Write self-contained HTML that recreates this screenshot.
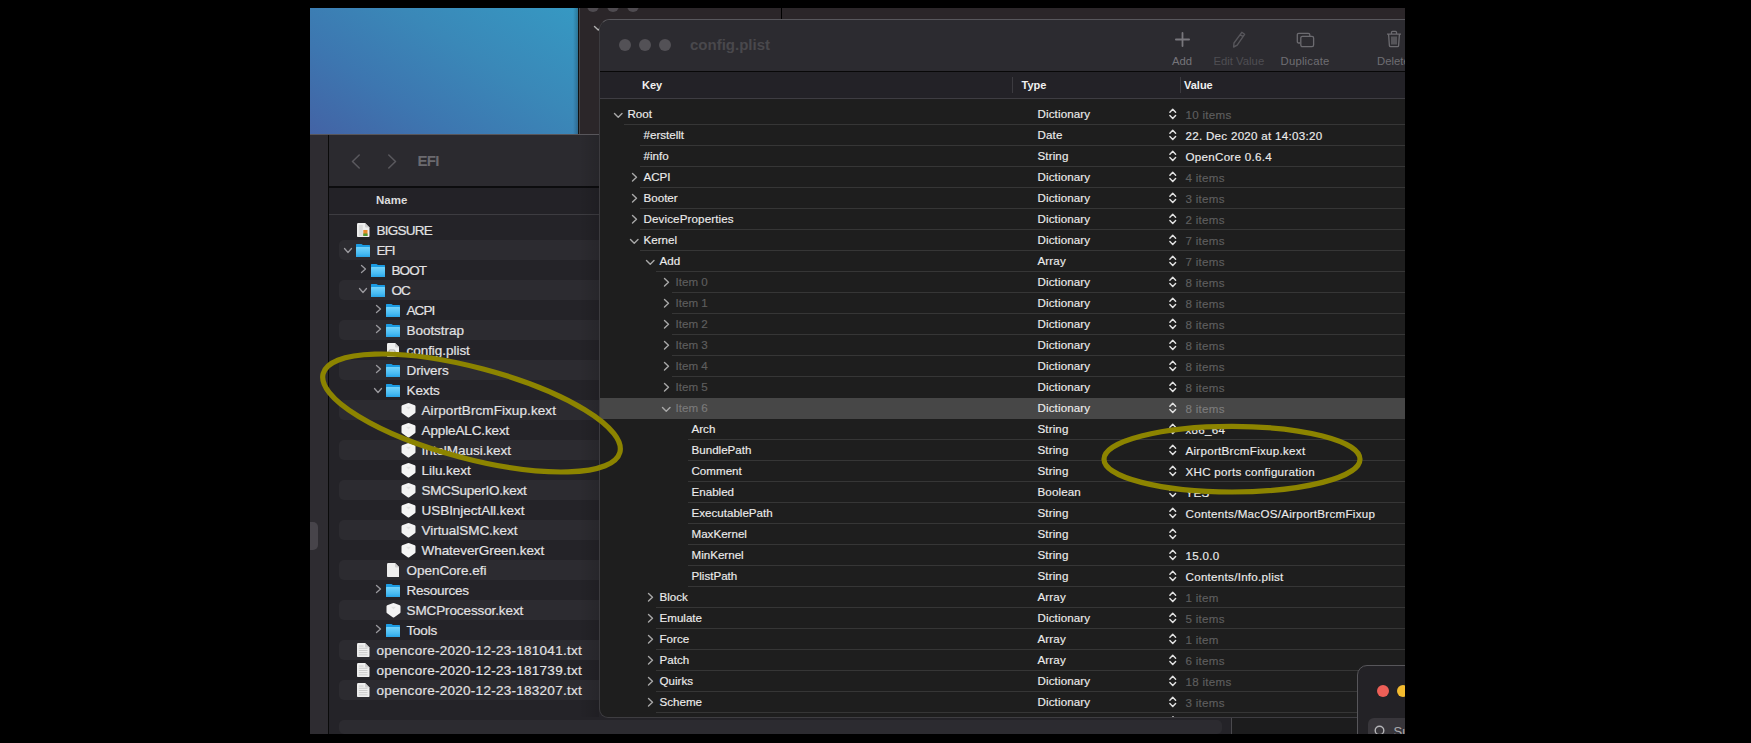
<!DOCTYPE html><html><head><meta charset="utf-8"><style>
html,body{margin:0;padding:0}
body{width:1751px;height:743px;background:#000;position:relative;overflow:hidden;font-family:"Liberation Sans", sans-serif}
.a{position:absolute}
</style></head><body>
<div class="a" style="left:310px;top:8px;width:268px;height:126px;background:linear-gradient(32deg,#4363a5 0%,#3d76b0 30%,#3a88b8 62%,#3699c3 100%)"></div>
<div class="a" style="left:573px;top:8px;width:5px;height:126px;background:linear-gradient(90deg,rgba(0,0,0,0),rgba(0,0,0,0.22))"></div>
<div class="a" style="left:578px;top:8px;width:827px;height:127px;background:#2b2629"></div>
<div class="a" style="left:578px;top:8px;width:1px;height:127px;background:#111"></div>
<div class="a" style="left:579px;top:8px;width:1px;height:127px;background:#4a4749"></div>
<div class="a" style="left:587px;top:0px;width:12px;height:12px;border-radius:50%;background:#4f4b50"></div>
<div class="a" style="left:607px;top:0px;width:12px;height:12px;border-radius:50%;background:#4f4b50"></div>
<div class="a" style="left:627px;top:0px;width:12px;height:12px;border-radius:50%;background:#4f4b50"></div>
<div class="a" style="left:0;top:0;width:1751px;height:8px;background:#000"></div>
<div class="a" style="left:781px;top:8px;width:1px;height:11px;background:#000"></div>
<svg style="position:absolute;left:593.5px;top:25.8px;overflow:visible" width="8.5" height="4.5"><path d="M0.5 0.5 L4.25 4.0 L8.0 0.5" fill="none" stroke="#b0b0b0" stroke-width="1.4" stroke-linecap="round" stroke-linejoin="round"/></svg>
<div class="a" style="left:310px;top:134px;width:922px;height:600px;background:#242328"></div>
<div class="a" style="left:310px;top:134px;width:922px;height:1px;background:#58565b"></div>
<div class="a" style="left:310px;top:135px;width:18px;height:599px;background:#2e2c31"></div>
<div class="a" style="left:328px;top:135px;width:1px;height:599px;background:#0a0a0a"></div>
<div class="a" style="left:310px;top:522px;width:8px;height:28px;background:#47444a;border-radius:0 5px 5px 0"></div>
<div class="a" style="left:329px;top:135px;width:903px;height:52px;background:#2b2a2f"></div>
<div class="a" style="left:329px;top:186px;width:903px;height:2px;background:#0c0c0e"></div>
<svg class="a" style="left:351px;top:153.5px" width="10" height="16"><path d="M8.2 1 L1.5 7.5 L8.2 14" fill="none" stroke="#5a595e" stroke-width="1.5" stroke-linecap="round" stroke-linejoin="round"/></svg>
<svg class="a" style="left:387px;top:153.5px" width="10" height="16"><path d="M1.8 1 L8.5 7.5 L1.8 14" fill="none" stroke="#5a595e" stroke-width="1.5" stroke-linecap="round" stroke-linejoin="round"/></svg>
<div style="position:absolute;left:417.5px;top:152px;font-size:15px;line-height:17px;color:#6b6a6f;font-weight:700;letter-spacing:-0.7px;white-space:nowrap;">EFI</div>
<div class="a" style="left:329px;top:188px;width:903px;height:26px;background:#232227"></div>
<div class="a" style="left:329px;top:214px;width:903px;height:1px;background:#3d3c41"></div>
<div style="position:absolute;left:376px;top:194.3px;font-size:11.5px;line-height:13.5px;color:#dcdcdc;font-weight:700;letter-spacing:0px;white-space:nowrap;">Name</div>
<div class="a" style="left:1231px;top:134px;width:1px;height:600px;background:#4a494d"></div>
<div class="a" style="left:339px;top:240px;width:883px;height:20px;background:#2c2b30;border-radius:5px"></div>
<div class="a" style="left:339px;top:280px;width:883px;height:20px;background:#2c2b30;border-radius:5px"></div>
<div class="a" style="left:339px;top:320px;width:883px;height:20px;background:#2c2b30;border-radius:5px"></div>
<div class="a" style="left:339px;top:360px;width:883px;height:20px;background:#2c2b30;border-radius:5px"></div>
<div class="a" style="left:339px;top:400px;width:883px;height:20px;background:#2c2b30;border-radius:5px"></div>
<div class="a" style="left:339px;top:440px;width:883px;height:20px;background:#2c2b30;border-radius:5px"></div>
<div class="a" style="left:339px;top:480px;width:883px;height:20px;background:#2c2b30;border-radius:5px"></div>
<div class="a" style="left:339px;top:520px;width:883px;height:20px;background:#2c2b30;border-radius:5px"></div>
<div class="a" style="left:339px;top:560px;width:883px;height:20px;background:#2c2b30;border-radius:5px"></div>
<div class="a" style="left:339px;top:600px;width:883px;height:20px;background:#2c2b30;border-radius:5px"></div>
<div class="a" style="left:339px;top:640px;width:883px;height:20px;background:#2c2b30;border-radius:5px"></div>
<div class="a" style="left:339px;top:680px;width:883px;height:20px;background:#2c2b30;border-radius:5px"></div>
<div class="a" style="left:339px;top:720px;width:883px;height:14px;background:#2c2b30;border-radius:5px"></div>
<svg style="position:absolute;left:357px;top:223px" width="12.5" height="14.2" viewBox="0 0 12.5 14.2"><path d="M1.2 0 L8 0 L12.5 4.5 L12.5 13 Q12.5 14.2 11.3 14.2 L1.2 14.2 Q0 14.2 0 13 L0 1.2 Q0 0 1.2 0 Z" fill="#efefef"/><path d="M8 0 L8 3.4 Q8 4.5 9.1 4.5 L12.5 4.5 Z" fill="#cfcfcf"/><rect x="1.8" y="2" width="4" height="11" fill="#dcdcdc"/><rect x="6.3" y="7" width="4.2" height="6" fill="#e88a2a"/><rect x="6.3" y="10.5" width="4.2" height="2.5" fill="#4f9a34"/></svg>
<div style="position:absolute;left:376.5px;top:222.7px;font-size:13.5px;line-height:15.5px;color:#e2e2e4;font-weight:400;letter-spacing:-0.75px;white-space:nowrap;-webkit-text-stroke:0.2px #e2e2e4">BIGSURE</div>
<svg style="position:absolute;left:343.5px;top:248px;overflow:visible" width="8" height="5"><path d="M0.5 0.5 L4.0 4.5 L7.5 0.5" fill="none" stroke="#9a999e" stroke-width="1.3" stroke-linecap="round" stroke-linejoin="round"/></svg>
<svg style="position:absolute;left:356px;top:243.5px" width="14" height="13.5" viewBox="0 0 14 13.5"><defs><linearGradient id="fg" x1="0" y1="0" x2="0" y2="1"><stop offset="0" stop-color="#74d3fb"/><stop offset="0.6" stop-color="#4bbdf3"/><stop offset="1" stop-color="#24a3e8"/></linearGradient></defs><path d="M0 0.6 Q0 0 0.6 0 L5.4 0 Q5.9 0 6.3 0.5 L6.8 1 L13.4 1 Q14 1 14 1.6 L14 13 Q14 13.5 13.5 13.5 L0.5 13.5 Q0 13.5 0 13 Z" fill="#1b9be2"/><path d="M0 3.4 Q0 2.9 0.5 2.9 L13.5 2.9 Q14 2.9 14 3.4 L14 13 Q14 13.5 13.5 13.5 L0.5 13.5 Q0 13.5 0 13 Z" fill="url(#fg)"/></svg>
<div style="position:absolute;left:376.5px;top:242.7px;font-size:13.5px;line-height:15.5px;color:#e2e2e4;font-weight:400;letter-spacing:-0.95px;white-space:nowrap;-webkit-text-stroke:0.2px #e2e2e4">EFI</div>
<svg style="position:absolute;left:360.5px;top:265.3px;overflow:visible" width="5" height="8"><path d="M0.5 0.5 L4.5 4.0 L0.5 7.5" fill="none" stroke="#9a999e" stroke-width="1.3" stroke-linecap="round" stroke-linejoin="round"/></svg>
<svg style="position:absolute;left:371px;top:263.5px" width="14" height="13.5" viewBox="0 0 14 13.5"><defs><linearGradient id="fg" x1="0" y1="0" x2="0" y2="1"><stop offset="0" stop-color="#74d3fb"/><stop offset="0.6" stop-color="#4bbdf3"/><stop offset="1" stop-color="#24a3e8"/></linearGradient></defs><path d="M0 0.6 Q0 0 0.6 0 L5.4 0 Q5.9 0 6.3 0.5 L6.8 1 L13.4 1 Q14 1 14 1.6 L14 13 Q14 13.5 13.5 13.5 L0.5 13.5 Q0 13.5 0 13 Z" fill="#1b9be2"/><path d="M0 3.4 Q0 2.9 0.5 2.9 L13.5 2.9 Q14 2.9 14 3.4 L14 13 Q14 13.5 13.5 13.5 L0.5 13.5 Q0 13.5 0 13 Z" fill="url(#fg)"/></svg>
<div style="position:absolute;left:391.5px;top:262.7px;font-size:13.5px;line-height:15.5px;color:#e2e2e4;font-weight:400;letter-spacing:-0.9px;white-space:nowrap;-webkit-text-stroke:0.2px #e2e2e4">BOOT</div>
<svg style="position:absolute;left:358.5px;top:288px;overflow:visible" width="8" height="5"><path d="M0.5 0.5 L4.0 4.5 L7.5 0.5" fill="none" stroke="#9a999e" stroke-width="1.3" stroke-linecap="round" stroke-linejoin="round"/></svg>
<svg style="position:absolute;left:371px;top:283.5px" width="14" height="13.5" viewBox="0 0 14 13.5"><defs><linearGradient id="fg" x1="0" y1="0" x2="0" y2="1"><stop offset="0" stop-color="#74d3fb"/><stop offset="0.6" stop-color="#4bbdf3"/><stop offset="1" stop-color="#24a3e8"/></linearGradient></defs><path d="M0 0.6 Q0 0 0.6 0 L5.4 0 Q5.9 0 6.3 0.5 L6.8 1 L13.4 1 Q14 1 14 1.6 L14 13 Q14 13.5 13.5 13.5 L0.5 13.5 Q0 13.5 0 13 Z" fill="#1b9be2"/><path d="M0 3.4 Q0 2.9 0.5 2.9 L13.5 2.9 Q14 2.9 14 3.4 L14 13 Q14 13.5 13.5 13.5 L0.5 13.5 Q0 13.5 0 13 Z" fill="url(#fg)"/></svg>
<div style="position:absolute;left:391.5px;top:282.7px;font-size:13.5px;line-height:15.5px;color:#e2e2e4;font-weight:400;letter-spacing:-1.0px;white-space:nowrap;-webkit-text-stroke:0.2px #e2e2e4">OC</div>
<svg style="position:absolute;left:375.5px;top:305.3px;overflow:visible" width="5" height="8"><path d="M0.5 0.5 L4.5 4.0 L0.5 7.5" fill="none" stroke="#9a999e" stroke-width="1.3" stroke-linecap="round" stroke-linejoin="round"/></svg>
<svg style="position:absolute;left:386px;top:303.5px" width="14" height="13.5" viewBox="0 0 14 13.5"><defs><linearGradient id="fg" x1="0" y1="0" x2="0" y2="1"><stop offset="0" stop-color="#74d3fb"/><stop offset="0.6" stop-color="#4bbdf3"/><stop offset="1" stop-color="#24a3e8"/></linearGradient></defs><path d="M0 0.6 Q0 0 0.6 0 L5.4 0 Q5.9 0 6.3 0.5 L6.8 1 L13.4 1 Q14 1 14 1.6 L14 13 Q14 13.5 13.5 13.5 L0.5 13.5 Q0 13.5 0 13 Z" fill="#1b9be2"/><path d="M0 3.4 Q0 2.9 0.5 2.9 L13.5 2.9 Q14 2.9 14 3.4 L14 13 Q14 13.5 13.5 13.5 L0.5 13.5 Q0 13.5 0 13 Z" fill="url(#fg)"/></svg>
<div style="position:absolute;left:406.5px;top:302.7px;font-size:13.5px;line-height:15.5px;color:#e2e2e4;font-weight:400;letter-spacing:-0.9px;white-space:nowrap;-webkit-text-stroke:0.2px #e2e2e4">ACPI</div>
<svg style="position:absolute;left:375.5px;top:325.3px;overflow:visible" width="5" height="8"><path d="M0.5 0.5 L4.5 4.0 L0.5 7.5" fill="none" stroke="#9a999e" stroke-width="1.3" stroke-linecap="round" stroke-linejoin="round"/></svg>
<svg style="position:absolute;left:386px;top:323.5px" width="14" height="13.5" viewBox="0 0 14 13.5"><defs><linearGradient id="fg" x1="0" y1="0" x2="0" y2="1"><stop offset="0" stop-color="#74d3fb"/><stop offset="0.6" stop-color="#4bbdf3"/><stop offset="1" stop-color="#24a3e8"/></linearGradient></defs><path d="M0 0.6 Q0 0 0.6 0 L5.4 0 Q5.9 0 6.3 0.5 L6.8 1 L13.4 1 Q14 1 14 1.6 L14 13 Q14 13.5 13.5 13.5 L0.5 13.5 Q0 13.5 0 13 Z" fill="#1b9be2"/><path d="M0 3.4 Q0 2.9 0.5 2.9 L13.5 2.9 Q14 2.9 14 3.4 L14 13 Q14 13.5 13.5 13.5 L0.5 13.5 Q0 13.5 0 13 Z" fill="url(#fg)"/></svg>
<div style="position:absolute;left:406.5px;top:322.7px;font-size:13.5px;line-height:15.5px;color:#e2e2e4;font-weight:400;letter-spacing:-0.04px;white-space:nowrap;-webkit-text-stroke:0.2px #e2e2e4">Bootstrap</div>
<svg style="position:absolute;left:386.7px;top:343.2px" width="12.5" height="14.2" viewBox="0 0 12.5 14.2"><path d="M1.2 0 L8 0 L12.5 4.5 L12.5 13 Q12.5 14.2 11.3 14.2 L1.2 14.2 Q0 14.2 0 13 L0 1.2 Q0 0 1.2 0 Z" fill="#efefef"/><path d="M8 0 L8 3.4 Q8 4.5 9.1 4.5 L12.5 4.5 Z" fill="#cfcfcf"/><rect x="2" y="7" width="6" height="5" rx="1" fill="none" stroke="#a0a0a0" stroke-width="0.9"/></svg>
<div style="position:absolute;left:406.5px;top:342.7px;font-size:13.5px;line-height:15.5px;color:#e2e2e4;font-weight:400;letter-spacing:-0.04px;white-space:nowrap;-webkit-text-stroke:0.2px #e2e2e4">config.plist</div>
<svg style="position:absolute;left:375.5px;top:365.3px;overflow:visible" width="5" height="8"><path d="M0.5 0.5 L4.5 4.0 L0.5 7.5" fill="none" stroke="#9a999e" stroke-width="1.3" stroke-linecap="round" stroke-linejoin="round"/></svg>
<svg style="position:absolute;left:386px;top:363.5px" width="14" height="13.5" viewBox="0 0 14 13.5"><defs><linearGradient id="fg" x1="0" y1="0" x2="0" y2="1"><stop offset="0" stop-color="#74d3fb"/><stop offset="0.6" stop-color="#4bbdf3"/><stop offset="1" stop-color="#24a3e8"/></linearGradient></defs><path d="M0 0.6 Q0 0 0.6 0 L5.4 0 Q5.9 0 6.3 0.5 L6.8 1 L13.4 1 Q14 1 14 1.6 L14 13 Q14 13.5 13.5 13.5 L0.5 13.5 Q0 13.5 0 13 Z" fill="#1b9be2"/><path d="M0 3.4 Q0 2.9 0.5 2.9 L13.5 2.9 Q14 2.9 14 3.4 L14 13 Q14 13.5 13.5 13.5 L0.5 13.5 Q0 13.5 0 13 Z" fill="url(#fg)"/></svg>
<div style="position:absolute;left:406.5px;top:362.7px;font-size:13.5px;line-height:15.5px;color:#e2e2e4;font-weight:400;letter-spacing:-0.1px;white-space:nowrap;-webkit-text-stroke:0.2px #e2e2e4">Drivers</div>
<svg style="position:absolute;left:373.5px;top:388px;overflow:visible" width="8" height="5"><path d="M0.5 0.5 L4.0 4.5 L7.5 0.5" fill="none" stroke="#9a999e" stroke-width="1.3" stroke-linecap="round" stroke-linejoin="round"/></svg>
<svg style="position:absolute;left:386px;top:383.5px" width="14" height="13.5" viewBox="0 0 14 13.5"><defs><linearGradient id="fg" x1="0" y1="0" x2="0" y2="1"><stop offset="0" stop-color="#74d3fb"/><stop offset="0.6" stop-color="#4bbdf3"/><stop offset="1" stop-color="#24a3e8"/></linearGradient></defs><path d="M0 0.6 Q0 0 0.6 0 L5.4 0 Q5.9 0 6.3 0.5 L6.8 1 L13.4 1 Q14 1 14 1.6 L14 13 Q14 13.5 13.5 13.5 L0.5 13.5 Q0 13.5 0 13 Z" fill="#1b9be2"/><path d="M0 3.4 Q0 2.9 0.5 2.9 L13.5 2.9 Q14 2.9 14 3.4 L14 13 Q14 13.5 13.5 13.5 L0.5 13.5 Q0 13.5 0 13 Z" fill="url(#fg)"/></svg>
<div style="position:absolute;left:406.5px;top:382.7px;font-size:13.5px;line-height:15.5px;color:#e2e2e4;font-weight:400;letter-spacing:-0.1px;white-space:nowrap;-webkit-text-stroke:0.2px #e2e2e4">Kexts</div>
<svg style="position:absolute;left:401px;top:403px" width="15" height="15" viewBox="0 0 15 15"><path d="M7.5 0.1 Q7.9 0.1 8.4 0.3 L13.8 2.3 Q14.5 2.6 14.5 3.4 L14.5 9.2 Q14.5 9.9 13.9 10.3 L8.3 14.3 Q7.5 14.8 6.7 14.3 L1.1 10.3 Q0.5 9.9 0.5 9.2 L0.5 3.4 Q0.5 2.6 1.2 2.3 L6.6 0.3 Q7.1 0.1 7.5 0.1 Z" fill="#f4f4f4"/><path d="M5 3.8 L10 3.8 L7.5 6.4 Z" fill="#e3e3e3"/></svg>
<div style="position:absolute;left:421.5px;top:402.7px;font-size:13.5px;line-height:15.5px;color:#e2e2e4;font-weight:400;letter-spacing:0.08px;white-space:nowrap;-webkit-text-stroke:0.2px #e2e2e4">AirportBrcmFixup.kext</div>
<svg style="position:absolute;left:401px;top:423px" width="15" height="15" viewBox="0 0 15 15"><path d="M7.5 0.1 Q7.9 0.1 8.4 0.3 L13.8 2.3 Q14.5 2.6 14.5 3.4 L14.5 9.2 Q14.5 9.9 13.9 10.3 L8.3 14.3 Q7.5 14.8 6.7 14.3 L1.1 10.3 Q0.5 9.9 0.5 9.2 L0.5 3.4 Q0.5 2.6 1.2 2.3 L6.6 0.3 Q7.1 0.1 7.5 0.1 Z" fill="#f4f4f4"/><path d="M5 3.8 L10 3.8 L7.5 6.4 Z" fill="#e3e3e3"/></svg>
<div style="position:absolute;left:421.5px;top:422.7px;font-size:13.5px;line-height:15.5px;color:#e2e2e4;font-weight:400;letter-spacing:-0.12px;white-space:nowrap;-webkit-text-stroke:0.2px #e2e2e4">AppleALC.kext</div>
<svg style="position:absolute;left:401px;top:443px" width="15" height="15" viewBox="0 0 15 15"><path d="M7.5 0.1 Q7.9 0.1 8.4 0.3 L13.8 2.3 Q14.5 2.6 14.5 3.4 L14.5 9.2 Q14.5 9.9 13.9 10.3 L8.3 14.3 Q7.5 14.8 6.7 14.3 L1.1 10.3 Q0.5 9.9 0.5 9.2 L0.5 3.4 Q0.5 2.6 1.2 2.3 L6.6 0.3 Q7.1 0.1 7.5 0.1 Z" fill="#f4f4f4"/><path d="M5 3.8 L10 3.8 L7.5 6.4 Z" fill="#e3e3e3"/></svg>
<div style="position:absolute;left:421.5px;top:442.7px;font-size:13.5px;line-height:15.5px;color:#e2e2e4;font-weight:400;letter-spacing:-0.04px;white-space:nowrap;-webkit-text-stroke:0.2px #e2e2e4">IntelMausi.kext</div>
<svg style="position:absolute;left:401px;top:463px" width="15" height="15" viewBox="0 0 15 15"><path d="M7.5 0.1 Q7.9 0.1 8.4 0.3 L13.8 2.3 Q14.5 2.6 14.5 3.4 L14.5 9.2 Q14.5 9.9 13.9 10.3 L8.3 14.3 Q7.5 14.8 6.7 14.3 L1.1 10.3 Q0.5 9.9 0.5 9.2 L0.5 3.4 Q0.5 2.6 1.2 2.3 L6.6 0.3 Q7.1 0.1 7.5 0.1 Z" fill="#f4f4f4"/><path d="M5 3.8 L10 3.8 L7.5 6.4 Z" fill="#e3e3e3"/></svg>
<div style="position:absolute;left:421.5px;top:462.7px;font-size:13.5px;line-height:15.5px;color:#e2e2e4;font-weight:400;letter-spacing:-0.04px;white-space:nowrap;-webkit-text-stroke:0.2px #e2e2e4">Lilu.kext</div>
<svg style="position:absolute;left:401px;top:483px" width="15" height="15" viewBox="0 0 15 15"><path d="M7.5 0.1 Q7.9 0.1 8.4 0.3 L13.8 2.3 Q14.5 2.6 14.5 3.4 L14.5 9.2 Q14.5 9.9 13.9 10.3 L8.3 14.3 Q7.5 14.8 6.7 14.3 L1.1 10.3 Q0.5 9.9 0.5 9.2 L0.5 3.4 Q0.5 2.6 1.2 2.3 L6.6 0.3 Q7.1 0.1 7.5 0.1 Z" fill="#f4f4f4"/><path d="M5 3.8 L10 3.8 L7.5 6.4 Z" fill="#e3e3e3"/></svg>
<div style="position:absolute;left:421.5px;top:482.7px;font-size:13.5px;line-height:15.5px;color:#e2e2e4;font-weight:400;letter-spacing:-0.25px;white-space:nowrap;-webkit-text-stroke:0.2px #e2e2e4">SMCSuperIO.kext</div>
<svg style="position:absolute;left:401px;top:503px" width="15" height="15" viewBox="0 0 15 15"><path d="M7.5 0.1 Q7.9 0.1 8.4 0.3 L13.8 2.3 Q14.5 2.6 14.5 3.4 L14.5 9.2 Q14.5 9.9 13.9 10.3 L8.3 14.3 Q7.5 14.8 6.7 14.3 L1.1 10.3 Q0.5 9.9 0.5 9.2 L0.5 3.4 Q0.5 2.6 1.2 2.3 L6.6 0.3 Q7.1 0.1 7.5 0.1 Z" fill="#f4f4f4"/><path d="M5 3.8 L10 3.8 L7.5 6.4 Z" fill="#e3e3e3"/></svg>
<div style="position:absolute;left:421.5px;top:502.7px;font-size:13.5px;line-height:15.5px;color:#e2e2e4;font-weight:400;letter-spacing:-0.04px;white-space:nowrap;-webkit-text-stroke:0.2px #e2e2e4">USBInjectAll.kext</div>
<svg style="position:absolute;left:401px;top:523px" width="15" height="15" viewBox="0 0 15 15"><path d="M7.5 0.1 Q7.9 0.1 8.4 0.3 L13.8 2.3 Q14.5 2.6 14.5 3.4 L14.5 9.2 Q14.5 9.9 13.9 10.3 L8.3 14.3 Q7.5 14.8 6.7 14.3 L1.1 10.3 Q0.5 9.9 0.5 9.2 L0.5 3.4 Q0.5 2.6 1.2 2.3 L6.6 0.3 Q7.1 0.1 7.5 0.1 Z" fill="#f4f4f4"/><path d="M5 3.8 L10 3.8 L7.5 6.4 Z" fill="#e3e3e3"/></svg>
<div style="position:absolute;left:421.5px;top:522.7px;font-size:13.5px;line-height:15.5px;color:#e2e2e4;font-weight:400;letter-spacing:-0.04px;white-space:nowrap;-webkit-text-stroke:0.2px #e2e2e4">VirtualSMC.kext</div>
<svg style="position:absolute;left:401px;top:543px" width="15" height="15" viewBox="0 0 15 15"><path d="M7.5 0.1 Q7.9 0.1 8.4 0.3 L13.8 2.3 Q14.5 2.6 14.5 3.4 L14.5 9.2 Q14.5 9.9 13.9 10.3 L8.3 14.3 Q7.5 14.8 6.7 14.3 L1.1 10.3 Q0.5 9.9 0.5 9.2 L0.5 3.4 Q0.5 2.6 1.2 2.3 L6.6 0.3 Q7.1 0.1 7.5 0.1 Z" fill="#f4f4f4"/><path d="M5 3.8 L10 3.8 L7.5 6.4 Z" fill="#e3e3e3"/></svg>
<div style="position:absolute;left:421.5px;top:542.7px;font-size:13.5px;line-height:15.5px;color:#e2e2e4;font-weight:400;letter-spacing:-0.06px;white-space:nowrap;-webkit-text-stroke:0.2px #e2e2e4">WhateverGreen.kext</div>
<svg style="position:absolute;left:386.7px;top:563.2px" width="12.5" height="14.2" viewBox="0 0 12.5 14.2"><path d="M1.2 0 L8 0 L12.5 4.5 L12.5 13 Q12.5 14.2 11.3 14.2 L1.2 14.2 Q0 14.2 0 13 L0 1.2 Q0 0 1.2 0 Z" fill="#efefef"/><path d="M8 0 L8 3.4 Q8 4.5 9.1 4.5 L12.5 4.5 Z" fill="#cfcfcf"/></svg>
<div style="position:absolute;left:406.5px;top:562.7px;font-size:13.5px;line-height:15.5px;color:#e2e2e4;font-weight:400;letter-spacing:-0.03px;white-space:nowrap;-webkit-text-stroke:0.2px #e2e2e4">OpenCore.efi</div>
<svg style="position:absolute;left:375.5px;top:585.3px;overflow:visible" width="5" height="8"><path d="M0.5 0.5 L4.5 4.0 L0.5 7.5" fill="none" stroke="#9a999e" stroke-width="1.3" stroke-linecap="round" stroke-linejoin="round"/></svg>
<svg style="position:absolute;left:386px;top:583.5px" width="14" height="13.5" viewBox="0 0 14 13.5"><defs><linearGradient id="fg" x1="0" y1="0" x2="0" y2="1"><stop offset="0" stop-color="#74d3fb"/><stop offset="0.6" stop-color="#4bbdf3"/><stop offset="1" stop-color="#24a3e8"/></linearGradient></defs><path d="M0 0.6 Q0 0 0.6 0 L5.4 0 Q5.9 0 6.3 0.5 L6.8 1 L13.4 1 Q14 1 14 1.6 L14 13 Q14 13.5 13.5 13.5 L0.5 13.5 Q0 13.5 0 13 Z" fill="#1b9be2"/><path d="M0 3.4 Q0 2.9 0.5 2.9 L13.5 2.9 Q14 2.9 14 3.4 L14 13 Q14 13.5 13.5 13.5 L0.5 13.5 Q0 13.5 0 13 Z" fill="url(#fg)"/></svg>
<div style="position:absolute;left:406.5px;top:582.7px;font-size:13.5px;line-height:15.5px;color:#e2e2e4;font-weight:400;letter-spacing:-0.24px;white-space:nowrap;-webkit-text-stroke:0.2px #e2e2e4">Resources</div>
<svg style="position:absolute;left:386px;top:603px" width="15" height="15" viewBox="0 0 15 15"><path d="M7.5 0.1 Q7.9 0.1 8.4 0.3 L13.8 2.3 Q14.5 2.6 14.5 3.4 L14.5 9.2 Q14.5 9.9 13.9 10.3 L8.3 14.3 Q7.5 14.8 6.7 14.3 L1.1 10.3 Q0.5 9.9 0.5 9.2 L0.5 3.4 Q0.5 2.6 1.2 2.3 L6.6 0.3 Q7.1 0.1 7.5 0.1 Z" fill="#f4f4f4"/><path d="M5 3.8 L10 3.8 L7.5 6.4 Z" fill="#e3e3e3"/></svg>
<div style="position:absolute;left:406.5px;top:602.7px;font-size:13.5px;line-height:15.5px;color:#e2e2e4;font-weight:400;letter-spacing:-0.11px;white-space:nowrap;-webkit-text-stroke:0.2px #e2e2e4">SMCProcessor.kext</div>
<svg style="position:absolute;left:375.5px;top:625.3px;overflow:visible" width="5" height="8"><path d="M0.5 0.5 L4.5 4.0 L0.5 7.5" fill="none" stroke="#9a999e" stroke-width="1.3" stroke-linecap="round" stroke-linejoin="round"/></svg>
<svg style="position:absolute;left:386px;top:623.5px" width="14" height="13.5" viewBox="0 0 14 13.5"><defs><linearGradient id="fg" x1="0" y1="0" x2="0" y2="1"><stop offset="0" stop-color="#74d3fb"/><stop offset="0.6" stop-color="#4bbdf3"/><stop offset="1" stop-color="#24a3e8"/></linearGradient></defs><path d="M0 0.6 Q0 0 0.6 0 L5.4 0 Q5.9 0 6.3 0.5 L6.8 1 L13.4 1 Q14 1 14 1.6 L14 13 Q14 13.5 13.5 13.5 L0.5 13.5 Q0 13.5 0 13 Z" fill="#1b9be2"/><path d="M0 3.4 Q0 2.9 0.5 2.9 L13.5 2.9 Q14 2.9 14 3.4 L14 13 Q14 13.5 13.5 13.5 L0.5 13.5 Q0 13.5 0 13 Z" fill="url(#fg)"/></svg>
<div style="position:absolute;left:406.5px;top:622.7px;font-size:13.5px;line-height:15.5px;color:#e2e2e4;font-weight:400;letter-spacing:-0.2px;white-space:nowrap;-webkit-text-stroke:0.2px #e2e2e4">Tools</div>
<svg style="position:absolute;left:357px;top:643.2px" width="12.5" height="14.2" viewBox="0 0 12.5 14.2"><path d="M1.2 0 L8 0 L12.5 4.5 L12.5 13 Q12.5 14.2 11.3 14.2 L1.2 14.2 Q0 14.2 0 13 L0 1.2 Q0 0 1.2 0 Z" fill="#efefef"/><path d="M8 0 L8 3.4 Q8 4.5 9.1 4.5 L12.5 4.5 Z" fill="#cfcfcf"/><rect x="1.8" y="2.6" width="4.7" height="0.9" fill="#c8c8c8"/><rect x="1.8" y="4.800000000000001" width="8.7" height="0.9" fill="#c8c8c8"/><rect x="1.8" y="7.0" width="8.7" height="0.9" fill="#c8c8c8"/><rect x="1.8" y="9.200000000000001" width="8.7" height="0.9" fill="#c8c8c8"/><rect x="1.8" y="11.4" width="8.7" height="0.9" fill="#c8c8c8"/></svg>
<div style="position:absolute;left:376.5px;top:642.7px;font-size:13.5px;line-height:15.5px;color:#e2e2e4;font-weight:400;letter-spacing:0.27px;white-space:nowrap;-webkit-text-stroke:0.2px #e2e2e4">opencore-2020-12-23-181041.txt</div>
<svg style="position:absolute;left:357px;top:663.2px" width="12.5" height="14.2" viewBox="0 0 12.5 14.2"><path d="M1.2 0 L8 0 L12.5 4.5 L12.5 13 Q12.5 14.2 11.3 14.2 L1.2 14.2 Q0 14.2 0 13 L0 1.2 Q0 0 1.2 0 Z" fill="#efefef"/><path d="M8 0 L8 3.4 Q8 4.5 9.1 4.5 L12.5 4.5 Z" fill="#cfcfcf"/><rect x="1.8" y="2.6" width="4.7" height="0.9" fill="#c8c8c8"/><rect x="1.8" y="4.800000000000001" width="8.7" height="0.9" fill="#c8c8c8"/><rect x="1.8" y="7.0" width="8.7" height="0.9" fill="#c8c8c8"/><rect x="1.8" y="9.200000000000001" width="8.7" height="0.9" fill="#c8c8c8"/><rect x="1.8" y="11.4" width="8.7" height="0.9" fill="#c8c8c8"/></svg>
<div style="position:absolute;left:376.5px;top:662.7px;font-size:13.5px;line-height:15.5px;color:#e2e2e4;font-weight:400;letter-spacing:0.27px;white-space:nowrap;-webkit-text-stroke:0.2px #e2e2e4">opencore-2020-12-23-181739.txt</div>
<svg style="position:absolute;left:357px;top:683.2px" width="12.5" height="14.2" viewBox="0 0 12.5 14.2"><path d="M1.2 0 L8 0 L12.5 4.5 L12.5 13 Q12.5 14.2 11.3 14.2 L1.2 14.2 Q0 14.2 0 13 L0 1.2 Q0 0 1.2 0 Z" fill="#efefef"/><path d="M8 0 L8 3.4 Q8 4.5 9.1 4.5 L12.5 4.5 Z" fill="#cfcfcf"/><rect x="1.8" y="2.6" width="4.7" height="0.9" fill="#c8c8c8"/><rect x="1.8" y="4.800000000000001" width="8.7" height="0.9" fill="#c8c8c8"/><rect x="1.8" y="7.0" width="8.7" height="0.9" fill="#c8c8c8"/><rect x="1.8" y="9.200000000000001" width="8.7" height="0.9" fill="#c8c8c8"/><rect x="1.8" y="11.4" width="8.7" height="0.9" fill="#c8c8c8"/></svg>
<div style="position:absolute;left:376.5px;top:682.7px;font-size:13.5px;line-height:15.5px;color:#e2e2e4;font-weight:400;letter-spacing:0.27px;white-space:nowrap;-webkit-text-stroke:0.2px #e2e2e4">opencore-2020-12-23-183207.txt</div>
<div class="a" style="left:1232px;top:640px;width:173px;height:94px;background:#1c1c1d"></div>
<div class="a" style="left:579px;top:135px;width:20px;height:582px;background:linear-gradient(90deg,rgba(0,0,0,0),rgba(0,0,0,0.12))"></div>
<div class="a" style="left:599px;top:19px;width:818px;height:699px;background:#1e1e1e;border:1px solid;border-color:#58575c #3f3e42 #3e3d41 #3c3b3f;border-radius:11px 0 0 9px;box-sizing:border-box;overflow:hidden">
<div class="a" style="left:0;top:0;width:820px;height:51px;background:#2c2b30"></div>
<div class="a" style="left:0;top:51px;width:820px;height:2px;background:#080808"></div>
<div class="a" style="left:19px;top:19px;width:12px;height:12px;border-radius:50%;background:#535156"></div>
<div class="a" style="left:39px;top:19px;width:12px;height:12px;border-radius:50%;background:#535156"></div>
<div class="a" style="left:59px;top:19px;width:12px;height:12px;border-radius:50%;background:#535156"></div>
<div style="position:absolute;left:90px;top:16.299999999999997px;font-size:15px;line-height:17px;color:#49484c;font-weight:700;letter-spacing:0px;white-space:nowrap;">config.plist</div>
</div>
<svg class="a" style="left:1174.9px;top:31.9px" width="15" height="15"><path d="M7.5 0.9 V14.1 M0.9 7.5 H14.1" stroke="#78777c" stroke-width="1.8" stroke-linecap="round"/></svg>
<div style="position:absolute;left:1172px;top:55px;font-size:11.3px;line-height:13.3px;color:#75747a;font-weight:400;letter-spacing:0px;white-space:nowrap;">Add</div>
<svg class="a" style="left:1232px;top:31px" width="14" height="17"><path d="M9.8 1.3 L12.6 3.3 L5.2 14.2 L1.6 16 L2 12 Z M8.2 3.6 L11.1 5.6" fill="none" stroke="#57565b" stroke-width="1.4" stroke-linejoin="round"/></svg>
<div style="position:absolute;left:1213.5px;top:55px;font-size:11.3px;line-height:13.3px;color:#4f4e53;font-weight:400;letter-spacing:0px;white-space:nowrap;">Edit Value</div>
<svg class="a" style="left:1296px;top:32px" width="19" height="16"><path d="M4 11 H2.8 Q1.3 11 1.3 9.5 V2.8 Q1.3 1.3 2.8 1.3 H12.3 Q13.8 1.3 13.8 2.8 V4" fill="none" stroke="#6c6b70" stroke-width="1.3"/><rect x="4.8" y="4.3" width="12.8" height="10.4" rx="1.6" fill="none" stroke="#6c6b70" stroke-width="1.3"/></svg>
<div style="position:absolute;left:1280.5px;top:55px;font-size:11.3px;line-height:13.3px;color:#6f6e73;font-weight:400;letter-spacing:0.22px;white-space:nowrap;">Duplicate</div>
<svg class="a" style="left:1386px;top:30px" width="16" height="18"><path d="M1 4.2 H15 M5.5 4 V2.3 Q5.5 1.3 6.5 1.3 H9.5 Q10.5 1.3 10.5 2.3 V4 M2.6 4.5 L3.4 15.6 Q3.5 16.7 4.6 16.7 H11.4 Q12.5 16.7 12.6 15.6 L13.4 4.5 M6 6.5 V14.5 M8 6.5 V14.5 M10 6.5 V14.5" fill="none" stroke="#6c6b70" stroke-width="1.3"/></svg>
<div style="position:absolute;left:1377px;top:55px;font-size:11.3px;line-height:13.3px;color:#6f6e73;font-weight:400;letter-spacing:0px;white-space:nowrap;">Delete</div>
<div class="a" style="left:600px;top:72px;width:805px;height:26px;background:#232227"></div>
<div class="a" style="left:600px;top:98px;width:805px;height:1px;background:#3e3d42"></div>
<div style="position:absolute;left:642px;top:79px;font-size:11px;line-height:13px;color:#f0f0f0;font-weight:700;letter-spacing:0px;white-space:nowrap;">Key</div>
<div class="a" style="left:1012px;top:77px;width:1px;height:16px;background:#3c3b40"></div>
<div style="position:absolute;left:1021.5px;top:79px;font-size:11px;line-height:13px;color:#f0f0f0;font-weight:700;letter-spacing:0px;white-space:nowrap;">Type</div>
<div class="a" style="left:1180px;top:77px;width:1px;height:16px;background:#3c3b40"></div>
<div style="position:absolute;left:1184px;top:79px;font-size:11px;line-height:13px;color:#f0f0f0;font-weight:700;letter-spacing:0px;white-space:nowrap;">Value</div>
<div class="a" style="left:624.0px;top:124px;width:781.0px;height:1px;background:#363636"></div>
<svg style="position:absolute;left:613.5px;top:112.8px;overflow:visible" width="8.5" height="4.8"><path d="M0.5 0.5 L4.25 4.3 L8.0 0.5" fill="none" stroke="#a8a8a8" stroke-width="1.4" stroke-linecap="round" stroke-linejoin="round"/></svg>
<div style="position:absolute;left:627.5px;top:107.3386px;font-size:11.6px;line-height:13.6px;color:#ececec;font-weight:400;letter-spacing:0.0px;white-space:nowrap;-webkit-text-stroke:0.15px #ececec">Root</div>
<div style="position:absolute;left:1037.5px;top:107.3386px;font-size:11.6px;line-height:13.6px;color:#ececec;font-weight:400;letter-spacing:0.12px;white-space:nowrap;-webkit-text-stroke:0.15px #ececec">Dictionary</div>
<svg style="position:absolute;left:1169.3px;top:108px;overflow:visible" width="8" height="12"><path d="M0.9 4.2 L3.75 1.3 L6.6 4.2 M0.9 7.6 L3.75 10.6 L6.6 7.6" fill="none" stroke="#e2e2e2" stroke-width="1.45" stroke-linecap="round" stroke-linejoin="round"/></svg>
<div style="position:absolute;left:1185.5px;top:107.8386px;font-size:11.6px;line-height:13.6px;color:#5f5f5f;font-weight:400;letter-spacing:0.28px;white-space:nowrap;-webkit-text-stroke:0.15px #5f5f5f">10 items</div>
<div class="a" style="left:640.0px;top:145px;width:765.0px;height:1px;background:#363636"></div>
<div style="position:absolute;left:643.5px;top:128.3386px;font-size:11.6px;line-height:13.6px;color:#ececec;font-weight:400;letter-spacing:0.0px;white-space:nowrap;-webkit-text-stroke:0.15px #ececec">#erstellt</div>
<div style="position:absolute;left:1037.5px;top:128.3386px;font-size:11.6px;line-height:13.6px;color:#ececec;font-weight:400;letter-spacing:0.12px;white-space:nowrap;-webkit-text-stroke:0.15px #ececec">Date</div>
<svg style="position:absolute;left:1169.3px;top:129px;overflow:visible" width="8" height="12"><path d="M0.9 4.2 L3.75 1.3 L6.6 4.2 M0.9 7.6 L3.75 10.6 L6.6 7.6" fill="none" stroke="#e2e2e2" stroke-width="1.45" stroke-linecap="round" stroke-linejoin="round"/></svg>
<div style="position:absolute;left:1185.5px;top:128.8386px;font-size:11.6px;line-height:13.6px;color:#ececec;font-weight:400;letter-spacing:0.28px;white-space:nowrap;-webkit-text-stroke:0.15px #ececec">22. Dec 2020 at 14:03:20</div>
<div class="a" style="left:640.0px;top:166px;width:765.0px;height:1px;background:#363636"></div>
<div style="position:absolute;left:643.5px;top:149.3386px;font-size:11.6px;line-height:13.6px;color:#ececec;font-weight:400;letter-spacing:0.0px;white-space:nowrap;-webkit-text-stroke:0.15px #ececec">#info</div>
<div style="position:absolute;left:1037.5px;top:149.3386px;font-size:11.6px;line-height:13.6px;color:#ececec;font-weight:400;letter-spacing:0.12px;white-space:nowrap;-webkit-text-stroke:0.15px #ececec">String</div>
<svg style="position:absolute;left:1169.3px;top:150px;overflow:visible" width="8" height="12"><path d="M0.9 4.2 L3.75 1.3 L6.6 4.2 M0.9 7.6 L3.75 10.6 L6.6 7.6" fill="none" stroke="#e2e2e2" stroke-width="1.45" stroke-linecap="round" stroke-linejoin="round"/></svg>
<div style="position:absolute;left:1185.5px;top:149.8386px;font-size:11.6px;line-height:13.6px;color:#ececec;font-weight:400;letter-spacing:0.28px;white-space:nowrap;-webkit-text-stroke:0.15px #ececec">OpenCore 0.6.4</div>
<div class="a" style="left:640.0px;top:187px;width:765.0px;height:1px;background:#363636"></div>
<svg style="position:absolute;left:632.2px;top:172.8px;overflow:visible" width="5" height="8.5"><path d="M0.5 0.5 L4.5 4.25 L0.5 8.0" fill="none" stroke="#a8a8a8" stroke-width="1.4" stroke-linecap="round" stroke-linejoin="round"/></svg>
<div style="position:absolute;left:643.5px;top:170.3386px;font-size:11.6px;line-height:13.6px;color:#ececec;font-weight:400;letter-spacing:0.0px;white-space:nowrap;-webkit-text-stroke:0.15px #ececec">ACPI</div>
<div style="position:absolute;left:1037.5px;top:170.3386px;font-size:11.6px;line-height:13.6px;color:#ececec;font-weight:400;letter-spacing:0.12px;white-space:nowrap;-webkit-text-stroke:0.15px #ececec">Dictionary</div>
<svg style="position:absolute;left:1169.3px;top:171px;overflow:visible" width="8" height="12"><path d="M0.9 4.2 L3.75 1.3 L6.6 4.2 M0.9 7.6 L3.75 10.6 L6.6 7.6" fill="none" stroke="#e2e2e2" stroke-width="1.45" stroke-linecap="round" stroke-linejoin="round"/></svg>
<div style="position:absolute;left:1185.5px;top:170.8386px;font-size:11.6px;line-height:13.6px;color:#5f5f5f;font-weight:400;letter-spacing:0.28px;white-space:nowrap;-webkit-text-stroke:0.15px #5f5f5f">4 items</div>
<div class="a" style="left:640.0px;top:208px;width:765.0px;height:1px;background:#363636"></div>
<svg style="position:absolute;left:632.2px;top:193.8px;overflow:visible" width="5" height="8.5"><path d="M0.5 0.5 L4.5 4.25 L0.5 8.0" fill="none" stroke="#a8a8a8" stroke-width="1.4" stroke-linecap="round" stroke-linejoin="round"/></svg>
<div style="position:absolute;left:643.5px;top:191.3386px;font-size:11.6px;line-height:13.6px;color:#ececec;font-weight:400;letter-spacing:0.0px;white-space:nowrap;-webkit-text-stroke:0.15px #ececec">Booter</div>
<div style="position:absolute;left:1037.5px;top:191.3386px;font-size:11.6px;line-height:13.6px;color:#ececec;font-weight:400;letter-spacing:0.12px;white-space:nowrap;-webkit-text-stroke:0.15px #ececec">Dictionary</div>
<svg style="position:absolute;left:1169.3px;top:192px;overflow:visible" width="8" height="12"><path d="M0.9 4.2 L3.75 1.3 L6.6 4.2 M0.9 7.6 L3.75 10.6 L6.6 7.6" fill="none" stroke="#e2e2e2" stroke-width="1.45" stroke-linecap="round" stroke-linejoin="round"/></svg>
<div style="position:absolute;left:1185.5px;top:191.8386px;font-size:11.6px;line-height:13.6px;color:#5f5f5f;font-weight:400;letter-spacing:0.28px;white-space:nowrap;-webkit-text-stroke:0.15px #5f5f5f">3 items</div>
<div class="a" style="left:640.0px;top:229px;width:765.0px;height:1px;background:#363636"></div>
<svg style="position:absolute;left:632.2px;top:214.8px;overflow:visible" width="5" height="8.5"><path d="M0.5 0.5 L4.5 4.25 L0.5 8.0" fill="none" stroke="#a8a8a8" stroke-width="1.4" stroke-linecap="round" stroke-linejoin="round"/></svg>
<div style="position:absolute;left:643.5px;top:212.3386px;font-size:11.6px;line-height:13.6px;color:#ececec;font-weight:400;letter-spacing:0.12px;white-space:nowrap;-webkit-text-stroke:0.15px #ececec">DeviceProperties</div>
<div style="position:absolute;left:1037.5px;top:212.3386px;font-size:11.6px;line-height:13.6px;color:#ececec;font-weight:400;letter-spacing:0.12px;white-space:nowrap;-webkit-text-stroke:0.15px #ececec">Dictionary</div>
<svg style="position:absolute;left:1169.3px;top:213px;overflow:visible" width="8" height="12"><path d="M0.9 4.2 L3.75 1.3 L6.6 4.2 M0.9 7.6 L3.75 10.6 L6.6 7.6" fill="none" stroke="#e2e2e2" stroke-width="1.45" stroke-linecap="round" stroke-linejoin="round"/></svg>
<div style="position:absolute;left:1185.5px;top:212.8386px;font-size:11.6px;line-height:13.6px;color:#5f5f5f;font-weight:400;letter-spacing:0.28px;white-space:nowrap;-webkit-text-stroke:0.15px #5f5f5f">2 items</div>
<div class="a" style="left:640.0px;top:250px;width:765.0px;height:1px;background:#363636"></div>
<svg style="position:absolute;left:629.5px;top:238.8px;overflow:visible" width="8.5" height="4.8"><path d="M0.5 0.5 L4.25 4.3 L8.0 0.5" fill="none" stroke="#a8a8a8" stroke-width="1.4" stroke-linecap="round" stroke-linejoin="round"/></svg>
<div style="position:absolute;left:643.5px;top:233.3386px;font-size:11.6px;line-height:13.6px;color:#ececec;font-weight:400;letter-spacing:0.0px;white-space:nowrap;-webkit-text-stroke:0.15px #ececec">Kernel</div>
<div style="position:absolute;left:1037.5px;top:233.3386px;font-size:11.6px;line-height:13.6px;color:#ececec;font-weight:400;letter-spacing:0.12px;white-space:nowrap;-webkit-text-stroke:0.15px #ececec">Dictionary</div>
<svg style="position:absolute;left:1169.3px;top:234px;overflow:visible" width="8" height="12"><path d="M0.9 4.2 L3.75 1.3 L6.6 4.2 M0.9 7.6 L3.75 10.6 L6.6 7.6" fill="none" stroke="#e2e2e2" stroke-width="1.45" stroke-linecap="round" stroke-linejoin="round"/></svg>
<div style="position:absolute;left:1185.5px;top:233.8386px;font-size:11.6px;line-height:13.6px;color:#5f5f5f;font-weight:400;letter-spacing:0.28px;white-space:nowrap;-webkit-text-stroke:0.15px #5f5f5f">7 items</div>
<div class="a" style="left:656.0px;top:271px;width:749.0px;height:1px;background:#363636"></div>
<svg style="position:absolute;left:645.5px;top:259.8px;overflow:visible" width="8.5" height="4.8"><path d="M0.5 0.5 L4.25 4.3 L8.0 0.5" fill="none" stroke="#a8a8a8" stroke-width="1.4" stroke-linecap="round" stroke-linejoin="round"/></svg>
<div style="position:absolute;left:659.5px;top:254.3386px;font-size:11.6px;line-height:13.6px;color:#ececec;font-weight:400;letter-spacing:0.0px;white-space:nowrap;-webkit-text-stroke:0.15px #ececec">Add</div>
<div style="position:absolute;left:1037.5px;top:254.3386px;font-size:11.6px;line-height:13.6px;color:#ececec;font-weight:400;letter-spacing:0.12px;white-space:nowrap;-webkit-text-stroke:0.15px #ececec">Array</div>
<svg style="position:absolute;left:1169.3px;top:255px;overflow:visible" width="8" height="12"><path d="M0.9 4.2 L3.75 1.3 L6.6 4.2 M0.9 7.6 L3.75 10.6 L6.6 7.6" fill="none" stroke="#e2e2e2" stroke-width="1.45" stroke-linecap="round" stroke-linejoin="round"/></svg>
<div style="position:absolute;left:1185.5px;top:254.8386px;font-size:11.6px;line-height:13.6px;color:#5f5f5f;font-weight:400;letter-spacing:0.28px;white-space:nowrap;-webkit-text-stroke:0.15px #5f5f5f">7 items</div>
<div class="a" style="left:672.0px;top:292px;width:733.0px;height:1px;background:#363636"></div>
<svg style="position:absolute;left:664.2px;top:277.8px;overflow:visible" width="5" height="8.5"><path d="M0.5 0.5 L4.5 4.25 L0.5 8.0" fill="none" stroke="#a8a8a8" stroke-width="1.4" stroke-linecap="round" stroke-linejoin="round"/></svg>
<div style="position:absolute;left:675.5px;top:275.3386px;font-size:11.6px;line-height:13.6px;color:#5e5e5e;font-weight:400;letter-spacing:0.0px;white-space:nowrap;-webkit-text-stroke:0.15px #5e5e5e">Item 0</div>
<div style="position:absolute;left:1037.5px;top:275.3386px;font-size:11.6px;line-height:13.6px;color:#ececec;font-weight:400;letter-spacing:0.12px;white-space:nowrap;-webkit-text-stroke:0.15px #ececec">Dictionary</div>
<svg style="position:absolute;left:1169.3px;top:276px;overflow:visible" width="8" height="12"><path d="M0.9 4.2 L3.75 1.3 L6.6 4.2 M0.9 7.6 L3.75 10.6 L6.6 7.6" fill="none" stroke="#e2e2e2" stroke-width="1.45" stroke-linecap="round" stroke-linejoin="round"/></svg>
<div style="position:absolute;left:1185.5px;top:275.8386px;font-size:11.6px;line-height:13.6px;color:#5f5f5f;font-weight:400;letter-spacing:0.28px;white-space:nowrap;-webkit-text-stroke:0.15px #5f5f5f">8 items</div>
<div class="a" style="left:672.0px;top:313px;width:733.0px;height:1px;background:#363636"></div>
<svg style="position:absolute;left:664.2px;top:298.8px;overflow:visible" width="5" height="8.5"><path d="M0.5 0.5 L4.5 4.25 L0.5 8.0" fill="none" stroke="#a8a8a8" stroke-width="1.4" stroke-linecap="round" stroke-linejoin="round"/></svg>
<div style="position:absolute;left:675.5px;top:296.3386px;font-size:11.6px;line-height:13.6px;color:#5e5e5e;font-weight:400;letter-spacing:0.0px;white-space:nowrap;-webkit-text-stroke:0.15px #5e5e5e">Item 1</div>
<div style="position:absolute;left:1037.5px;top:296.3386px;font-size:11.6px;line-height:13.6px;color:#ececec;font-weight:400;letter-spacing:0.12px;white-space:nowrap;-webkit-text-stroke:0.15px #ececec">Dictionary</div>
<svg style="position:absolute;left:1169.3px;top:297px;overflow:visible" width="8" height="12"><path d="M0.9 4.2 L3.75 1.3 L6.6 4.2 M0.9 7.6 L3.75 10.6 L6.6 7.6" fill="none" stroke="#e2e2e2" stroke-width="1.45" stroke-linecap="round" stroke-linejoin="round"/></svg>
<div style="position:absolute;left:1185.5px;top:296.8386px;font-size:11.6px;line-height:13.6px;color:#5f5f5f;font-weight:400;letter-spacing:0.28px;white-space:nowrap;-webkit-text-stroke:0.15px #5f5f5f">8 items</div>
<div class="a" style="left:672.0px;top:334px;width:733.0px;height:1px;background:#363636"></div>
<svg style="position:absolute;left:664.2px;top:319.8px;overflow:visible" width="5" height="8.5"><path d="M0.5 0.5 L4.5 4.25 L0.5 8.0" fill="none" stroke="#a8a8a8" stroke-width="1.4" stroke-linecap="round" stroke-linejoin="round"/></svg>
<div style="position:absolute;left:675.5px;top:317.3386px;font-size:11.6px;line-height:13.6px;color:#5e5e5e;font-weight:400;letter-spacing:0.0px;white-space:nowrap;-webkit-text-stroke:0.15px #5e5e5e">Item 2</div>
<div style="position:absolute;left:1037.5px;top:317.3386px;font-size:11.6px;line-height:13.6px;color:#ececec;font-weight:400;letter-spacing:0.12px;white-space:nowrap;-webkit-text-stroke:0.15px #ececec">Dictionary</div>
<svg style="position:absolute;left:1169.3px;top:318px;overflow:visible" width="8" height="12"><path d="M0.9 4.2 L3.75 1.3 L6.6 4.2 M0.9 7.6 L3.75 10.6 L6.6 7.6" fill="none" stroke="#e2e2e2" stroke-width="1.45" stroke-linecap="round" stroke-linejoin="round"/></svg>
<div style="position:absolute;left:1185.5px;top:317.8386px;font-size:11.6px;line-height:13.6px;color:#5f5f5f;font-weight:400;letter-spacing:0.28px;white-space:nowrap;-webkit-text-stroke:0.15px #5f5f5f">8 items</div>
<div class="a" style="left:672.0px;top:355px;width:733.0px;height:1px;background:#363636"></div>
<svg style="position:absolute;left:664.2px;top:340.8px;overflow:visible" width="5" height="8.5"><path d="M0.5 0.5 L4.5 4.25 L0.5 8.0" fill="none" stroke="#a8a8a8" stroke-width="1.4" stroke-linecap="round" stroke-linejoin="round"/></svg>
<div style="position:absolute;left:675.5px;top:338.3386px;font-size:11.6px;line-height:13.6px;color:#5e5e5e;font-weight:400;letter-spacing:0.0px;white-space:nowrap;-webkit-text-stroke:0.15px #5e5e5e">Item 3</div>
<div style="position:absolute;left:1037.5px;top:338.3386px;font-size:11.6px;line-height:13.6px;color:#ececec;font-weight:400;letter-spacing:0.12px;white-space:nowrap;-webkit-text-stroke:0.15px #ececec">Dictionary</div>
<svg style="position:absolute;left:1169.3px;top:339px;overflow:visible" width="8" height="12"><path d="M0.9 4.2 L3.75 1.3 L6.6 4.2 M0.9 7.6 L3.75 10.6 L6.6 7.6" fill="none" stroke="#e2e2e2" stroke-width="1.45" stroke-linecap="round" stroke-linejoin="round"/></svg>
<div style="position:absolute;left:1185.5px;top:338.8386px;font-size:11.6px;line-height:13.6px;color:#5f5f5f;font-weight:400;letter-spacing:0.28px;white-space:nowrap;-webkit-text-stroke:0.15px #5f5f5f">8 items</div>
<div class="a" style="left:672.0px;top:376px;width:733.0px;height:1px;background:#363636"></div>
<svg style="position:absolute;left:664.2px;top:361.8px;overflow:visible" width="5" height="8.5"><path d="M0.5 0.5 L4.5 4.25 L0.5 8.0" fill="none" stroke="#a8a8a8" stroke-width="1.4" stroke-linecap="round" stroke-linejoin="round"/></svg>
<div style="position:absolute;left:675.5px;top:359.3386px;font-size:11.6px;line-height:13.6px;color:#5e5e5e;font-weight:400;letter-spacing:0.0px;white-space:nowrap;-webkit-text-stroke:0.15px #5e5e5e">Item 4</div>
<div style="position:absolute;left:1037.5px;top:359.3386px;font-size:11.6px;line-height:13.6px;color:#ececec;font-weight:400;letter-spacing:0.12px;white-space:nowrap;-webkit-text-stroke:0.15px #ececec">Dictionary</div>
<svg style="position:absolute;left:1169.3px;top:360px;overflow:visible" width="8" height="12"><path d="M0.9 4.2 L3.75 1.3 L6.6 4.2 M0.9 7.6 L3.75 10.6 L6.6 7.6" fill="none" stroke="#e2e2e2" stroke-width="1.45" stroke-linecap="round" stroke-linejoin="round"/></svg>
<div style="position:absolute;left:1185.5px;top:359.8386px;font-size:11.6px;line-height:13.6px;color:#5f5f5f;font-weight:400;letter-spacing:0.28px;white-space:nowrap;-webkit-text-stroke:0.15px #5f5f5f">8 items</div>
<svg style="position:absolute;left:664.2px;top:382.8px;overflow:visible" width="5" height="8.5"><path d="M0.5 0.5 L4.5 4.25 L0.5 8.0" fill="none" stroke="#a8a8a8" stroke-width="1.4" stroke-linecap="round" stroke-linejoin="round"/></svg>
<div style="position:absolute;left:675.5px;top:380.3386px;font-size:11.6px;line-height:13.6px;color:#5e5e5e;font-weight:400;letter-spacing:0.0px;white-space:nowrap;-webkit-text-stroke:0.15px #5e5e5e">Item 5</div>
<div style="position:absolute;left:1037.5px;top:380.3386px;font-size:11.6px;line-height:13.6px;color:#ececec;font-weight:400;letter-spacing:0.12px;white-space:nowrap;-webkit-text-stroke:0.15px #ececec">Dictionary</div>
<svg style="position:absolute;left:1169.3px;top:381px;overflow:visible" width="8" height="12"><path d="M0.9 4.2 L3.75 1.3 L6.6 4.2 M0.9 7.6 L3.75 10.6 L6.6 7.6" fill="none" stroke="#e2e2e2" stroke-width="1.45" stroke-linecap="round" stroke-linejoin="round"/></svg>
<div style="position:absolute;left:1185.5px;top:380.8386px;font-size:11.6px;line-height:13.6px;color:#5f5f5f;font-weight:400;letter-spacing:0.28px;white-space:nowrap;-webkit-text-stroke:0.15px #5f5f5f">8 items</div>
<div class="a" style="left:672.0px;top:418px;width:733.0px;height:1px;background:#363636"></div>
<div class="a" style="left:600px;top:398px;width:805px;height:21px;background:#474747"></div>
<svg style="position:absolute;left:661.5px;top:406.8px;overflow:visible" width="8.5" height="4.8"><path d="M0.5 0.5 L4.25 4.3 L8.0 0.5" fill="none" stroke="#a8a8a8" stroke-width="1.4" stroke-linecap="round" stroke-linejoin="round"/></svg>
<div style="position:absolute;left:675.5px;top:401.3386px;font-size:11.6px;line-height:13.6px;color:#7a7a7a;font-weight:400;letter-spacing:0.0px;white-space:nowrap;-webkit-text-stroke:0.15px #7a7a7a">Item 6</div>
<div style="position:absolute;left:1037.5px;top:401.3386px;font-size:11.6px;line-height:13.6px;color:#ececec;font-weight:400;letter-spacing:0.12px;white-space:nowrap;-webkit-text-stroke:0.15px #ececec">Dictionary</div>
<svg style="position:absolute;left:1169.3px;top:402px;overflow:visible" width="8" height="12"><path d="M0.9 4.2 L3.75 1.3 L6.6 4.2 M0.9 7.6 L3.75 10.6 L6.6 7.6" fill="none" stroke="#e2e2e2" stroke-width="1.45" stroke-linecap="round" stroke-linejoin="round"/></svg>
<div style="position:absolute;left:1185.5px;top:401.8386px;font-size:11.6px;line-height:13.6px;color:#7c7c7c;font-weight:400;letter-spacing:0.28px;white-space:nowrap;-webkit-text-stroke:0.15px #7c7c7c">8 items</div>
<div class="a" style="left:688.0px;top:439px;width:717.0px;height:1px;background:#363636"></div>
<div style="position:absolute;left:691.5px;top:422.3386px;font-size:11.6px;line-height:13.6px;color:#ececec;font-weight:400;letter-spacing:0.0px;white-space:nowrap;-webkit-text-stroke:0.15px #ececec">Arch</div>
<div style="position:absolute;left:1037.5px;top:422.3386px;font-size:11.6px;line-height:13.6px;color:#ececec;font-weight:400;letter-spacing:0.12px;white-space:nowrap;-webkit-text-stroke:0.15px #ececec">String</div>
<svg style="position:absolute;left:1169.3px;top:423px;overflow:visible" width="8" height="12"><path d="M0.9 4.2 L3.75 1.3 L6.6 4.2 M0.9 7.6 L3.75 10.6 L6.6 7.6" fill="none" stroke="#e2e2e2" stroke-width="1.45" stroke-linecap="round" stroke-linejoin="round"/></svg>
<div style="position:absolute;left:1185.5px;top:422.8386px;font-size:11.6px;line-height:13.6px;color:#ececec;font-weight:400;letter-spacing:0.28px;white-space:nowrap;-webkit-text-stroke:0.15px #ececec">x86_64</div>
<div class="a" style="left:688.0px;top:460px;width:717.0px;height:1px;background:#363636"></div>
<div style="position:absolute;left:691.5px;top:443.3386px;font-size:11.6px;line-height:13.6px;color:#ececec;font-weight:400;letter-spacing:0.0px;white-space:nowrap;-webkit-text-stroke:0.15px #ececec">BundlePath</div>
<div style="position:absolute;left:1037.5px;top:443.3386px;font-size:11.6px;line-height:13.6px;color:#ececec;font-weight:400;letter-spacing:0.12px;white-space:nowrap;-webkit-text-stroke:0.15px #ececec">String</div>
<svg style="position:absolute;left:1169.3px;top:444px;overflow:visible" width="8" height="12"><path d="M0.9 4.2 L3.75 1.3 L6.6 4.2 M0.9 7.6 L3.75 10.6 L6.6 7.6" fill="none" stroke="#e2e2e2" stroke-width="1.45" stroke-linecap="round" stroke-linejoin="round"/></svg>
<div style="position:absolute;left:1185.5px;top:443.8386px;font-size:11.6px;line-height:13.6px;color:#ececec;font-weight:400;letter-spacing:0.28px;white-space:nowrap;-webkit-text-stroke:0.15px #ececec">AirportBrcmFixup.kext</div>
<div class="a" style="left:688.0px;top:481px;width:717.0px;height:1px;background:#363636"></div>
<div style="position:absolute;left:691.5px;top:464.3386px;font-size:11.6px;line-height:13.6px;color:#ececec;font-weight:400;letter-spacing:0.0px;white-space:nowrap;-webkit-text-stroke:0.15px #ececec">Comment</div>
<div style="position:absolute;left:1037.5px;top:464.3386px;font-size:11.6px;line-height:13.6px;color:#ececec;font-weight:400;letter-spacing:0.12px;white-space:nowrap;-webkit-text-stroke:0.15px #ececec">String</div>
<svg style="position:absolute;left:1169.3px;top:465px;overflow:visible" width="8" height="12"><path d="M0.9 4.2 L3.75 1.3 L6.6 4.2 M0.9 7.6 L3.75 10.6 L6.6 7.6" fill="none" stroke="#e2e2e2" stroke-width="1.45" stroke-linecap="round" stroke-linejoin="round"/></svg>
<div style="position:absolute;left:1185.5px;top:464.8386px;font-size:11.6px;line-height:13.6px;color:#ececec;font-weight:400;letter-spacing:0.28px;white-space:nowrap;-webkit-text-stroke:0.15px #ececec">XHC ports configuration</div>
<div class="a" style="left:688.0px;top:502px;width:717.0px;height:1px;background:#363636"></div>
<div style="position:absolute;left:691.5px;top:485.3386px;font-size:11.6px;line-height:13.6px;color:#ececec;font-weight:400;letter-spacing:0.0px;white-space:nowrap;-webkit-text-stroke:0.15px #ececec">Enabled</div>
<div style="position:absolute;left:1037.5px;top:485.3386px;font-size:11.6px;line-height:13.6px;color:#ececec;font-weight:400;letter-spacing:0.12px;white-space:nowrap;-webkit-text-stroke:0.15px #ececec">Boolean</div>
<svg style="position:absolute;left:1169.3px;top:486px;overflow:visible" width="8" height="12"><path d="M0.9 4.2 L3.75 1.3 L6.6 4.2 M0.9 7.6 L3.75 10.6 L6.6 7.6" fill="none" stroke="#e2e2e2" stroke-width="1.45" stroke-linecap="round" stroke-linejoin="round"/></svg>
<div style="position:absolute;left:1185.5px;top:485.8386px;font-size:11.6px;line-height:13.6px;color:#ececec;font-weight:400;letter-spacing:0.28px;white-space:nowrap;-webkit-text-stroke:0.15px #ececec">YES</div>
<div class="a" style="left:688.0px;top:523px;width:717.0px;height:1px;background:#363636"></div>
<div style="position:absolute;left:691.5px;top:506.3386px;font-size:11.6px;line-height:13.6px;color:#ececec;font-weight:400;letter-spacing:0.0px;white-space:nowrap;-webkit-text-stroke:0.15px #ececec">ExecutablePath</div>
<div style="position:absolute;left:1037.5px;top:506.3386px;font-size:11.6px;line-height:13.6px;color:#ececec;font-weight:400;letter-spacing:0.12px;white-space:nowrap;-webkit-text-stroke:0.15px #ececec">String</div>
<svg style="position:absolute;left:1169.3px;top:507px;overflow:visible" width="8" height="12"><path d="M0.9 4.2 L3.75 1.3 L6.6 4.2 M0.9 7.6 L3.75 10.6 L6.6 7.6" fill="none" stroke="#e2e2e2" stroke-width="1.45" stroke-linecap="round" stroke-linejoin="round"/></svg>
<div style="position:absolute;left:1185.5px;top:506.8386px;font-size:11.6px;line-height:13.6px;color:#ececec;font-weight:400;letter-spacing:0.28px;white-space:nowrap;-webkit-text-stroke:0.15px #ececec">Contents/MacOS/AirportBrcmFixup</div>
<div class="a" style="left:688.0px;top:544px;width:717.0px;height:1px;background:#363636"></div>
<div style="position:absolute;left:691.5px;top:527.3386px;font-size:11.6px;line-height:13.6px;color:#ececec;font-weight:400;letter-spacing:0.0px;white-space:nowrap;-webkit-text-stroke:0.15px #ececec">MaxKernel</div>
<div style="position:absolute;left:1037.5px;top:527.3386px;font-size:11.6px;line-height:13.6px;color:#ececec;font-weight:400;letter-spacing:0.12px;white-space:nowrap;-webkit-text-stroke:0.15px #ececec">String</div>
<svg style="position:absolute;left:1169.3px;top:528px;overflow:visible" width="8" height="12"><path d="M0.9 4.2 L3.75 1.3 L6.6 4.2 M0.9 7.6 L3.75 10.6 L6.6 7.6" fill="none" stroke="#e2e2e2" stroke-width="1.45" stroke-linecap="round" stroke-linejoin="round"/></svg>
<div class="a" style="left:688.0px;top:565px;width:717.0px;height:1px;background:#363636"></div>
<div style="position:absolute;left:691.5px;top:548.3386px;font-size:11.6px;line-height:13.6px;color:#ececec;font-weight:400;letter-spacing:0.0px;white-space:nowrap;-webkit-text-stroke:0.15px #ececec">MinKernel</div>
<div style="position:absolute;left:1037.5px;top:548.3386px;font-size:11.6px;line-height:13.6px;color:#ececec;font-weight:400;letter-spacing:0.12px;white-space:nowrap;-webkit-text-stroke:0.15px #ececec">String</div>
<svg style="position:absolute;left:1169.3px;top:549px;overflow:visible" width="8" height="12"><path d="M0.9 4.2 L3.75 1.3 L6.6 4.2 M0.9 7.6 L3.75 10.6 L6.6 7.6" fill="none" stroke="#e2e2e2" stroke-width="1.45" stroke-linecap="round" stroke-linejoin="round"/></svg>
<div style="position:absolute;left:1185.5px;top:548.8386px;font-size:11.6px;line-height:13.6px;color:#ececec;font-weight:400;letter-spacing:0.28px;white-space:nowrap;-webkit-text-stroke:0.15px #ececec">15.0.0</div>
<div class="a" style="left:688.0px;top:586px;width:717.0px;height:1px;background:#363636"></div>
<div style="position:absolute;left:691.5px;top:569.3386px;font-size:11.6px;line-height:13.6px;color:#ececec;font-weight:400;letter-spacing:0.0px;white-space:nowrap;-webkit-text-stroke:0.15px #ececec">PlistPath</div>
<div style="position:absolute;left:1037.5px;top:569.3386px;font-size:11.6px;line-height:13.6px;color:#ececec;font-weight:400;letter-spacing:0.12px;white-space:nowrap;-webkit-text-stroke:0.15px #ececec">String</div>
<svg style="position:absolute;left:1169.3px;top:570px;overflow:visible" width="8" height="12"><path d="M0.9 4.2 L3.75 1.3 L6.6 4.2 M0.9 7.6 L3.75 10.6 L6.6 7.6" fill="none" stroke="#e2e2e2" stroke-width="1.45" stroke-linecap="round" stroke-linejoin="round"/></svg>
<div style="position:absolute;left:1185.5px;top:569.8386px;font-size:11.6px;line-height:13.6px;color:#ececec;font-weight:400;letter-spacing:0.28px;white-space:nowrap;-webkit-text-stroke:0.15px #ececec">Contents/Info.plist</div>
<div class="a" style="left:656.0px;top:607px;width:749.0px;height:1px;background:#363636"></div>
<svg style="position:absolute;left:648.2px;top:592.8px;overflow:visible" width="5" height="8.5"><path d="M0.5 0.5 L4.5 4.25 L0.5 8.0" fill="none" stroke="#a8a8a8" stroke-width="1.4" stroke-linecap="round" stroke-linejoin="round"/></svg>
<div style="position:absolute;left:659.5px;top:590.3386px;font-size:11.6px;line-height:13.6px;color:#ececec;font-weight:400;letter-spacing:0.0px;white-space:nowrap;-webkit-text-stroke:0.15px #ececec">Block</div>
<div style="position:absolute;left:1037.5px;top:590.3386px;font-size:11.6px;line-height:13.6px;color:#ececec;font-weight:400;letter-spacing:0.12px;white-space:nowrap;-webkit-text-stroke:0.15px #ececec">Array</div>
<svg style="position:absolute;left:1169.3px;top:591px;overflow:visible" width="8" height="12"><path d="M0.9 4.2 L3.75 1.3 L6.6 4.2 M0.9 7.6 L3.75 10.6 L6.6 7.6" fill="none" stroke="#e2e2e2" stroke-width="1.45" stroke-linecap="round" stroke-linejoin="round"/></svg>
<div style="position:absolute;left:1185.5px;top:590.8386px;font-size:11.6px;line-height:13.6px;color:#5f5f5f;font-weight:400;letter-spacing:0.28px;white-space:nowrap;-webkit-text-stroke:0.15px #5f5f5f">1 item</div>
<div class="a" style="left:656.0px;top:628px;width:749.0px;height:1px;background:#363636"></div>
<svg style="position:absolute;left:648.2px;top:613.8px;overflow:visible" width="5" height="8.5"><path d="M0.5 0.5 L4.5 4.25 L0.5 8.0" fill="none" stroke="#a8a8a8" stroke-width="1.4" stroke-linecap="round" stroke-linejoin="round"/></svg>
<div style="position:absolute;left:659.5px;top:611.3386px;font-size:11.6px;line-height:13.6px;color:#ececec;font-weight:400;letter-spacing:0.0px;white-space:nowrap;-webkit-text-stroke:0.15px #ececec">Emulate</div>
<div style="position:absolute;left:1037.5px;top:611.3386px;font-size:11.6px;line-height:13.6px;color:#ececec;font-weight:400;letter-spacing:0.12px;white-space:nowrap;-webkit-text-stroke:0.15px #ececec">Dictionary</div>
<svg style="position:absolute;left:1169.3px;top:612px;overflow:visible" width="8" height="12"><path d="M0.9 4.2 L3.75 1.3 L6.6 4.2 M0.9 7.6 L3.75 10.6 L6.6 7.6" fill="none" stroke="#e2e2e2" stroke-width="1.45" stroke-linecap="round" stroke-linejoin="round"/></svg>
<div style="position:absolute;left:1185.5px;top:611.8386px;font-size:11.6px;line-height:13.6px;color:#5f5f5f;font-weight:400;letter-spacing:0.28px;white-space:nowrap;-webkit-text-stroke:0.15px #5f5f5f">5 items</div>
<div class="a" style="left:656.0px;top:649px;width:749.0px;height:1px;background:#363636"></div>
<svg style="position:absolute;left:648.2px;top:634.8px;overflow:visible" width="5" height="8.5"><path d="M0.5 0.5 L4.5 4.25 L0.5 8.0" fill="none" stroke="#a8a8a8" stroke-width="1.4" stroke-linecap="round" stroke-linejoin="round"/></svg>
<div style="position:absolute;left:659.5px;top:632.3386px;font-size:11.6px;line-height:13.6px;color:#ececec;font-weight:400;letter-spacing:0.0px;white-space:nowrap;-webkit-text-stroke:0.15px #ececec">Force</div>
<div style="position:absolute;left:1037.5px;top:632.3386px;font-size:11.6px;line-height:13.6px;color:#ececec;font-weight:400;letter-spacing:0.12px;white-space:nowrap;-webkit-text-stroke:0.15px #ececec">Array</div>
<svg style="position:absolute;left:1169.3px;top:633px;overflow:visible" width="8" height="12"><path d="M0.9 4.2 L3.75 1.3 L6.6 4.2 M0.9 7.6 L3.75 10.6 L6.6 7.6" fill="none" stroke="#e2e2e2" stroke-width="1.45" stroke-linecap="round" stroke-linejoin="round"/></svg>
<div style="position:absolute;left:1185.5px;top:632.8386px;font-size:11.6px;line-height:13.6px;color:#5f5f5f;font-weight:400;letter-spacing:0.28px;white-space:nowrap;-webkit-text-stroke:0.15px #5f5f5f">1 item</div>
<div class="a" style="left:656.0px;top:670px;width:749.0px;height:1px;background:#363636"></div>
<svg style="position:absolute;left:648.2px;top:655.8px;overflow:visible" width="5" height="8.5"><path d="M0.5 0.5 L4.5 4.25 L0.5 8.0" fill="none" stroke="#a8a8a8" stroke-width="1.4" stroke-linecap="round" stroke-linejoin="round"/></svg>
<div style="position:absolute;left:659.5px;top:653.3386px;font-size:11.6px;line-height:13.6px;color:#ececec;font-weight:400;letter-spacing:0.0px;white-space:nowrap;-webkit-text-stroke:0.15px #ececec">Patch</div>
<div style="position:absolute;left:1037.5px;top:653.3386px;font-size:11.6px;line-height:13.6px;color:#ececec;font-weight:400;letter-spacing:0.12px;white-space:nowrap;-webkit-text-stroke:0.15px #ececec">Array</div>
<svg style="position:absolute;left:1169.3px;top:654px;overflow:visible" width="8" height="12"><path d="M0.9 4.2 L3.75 1.3 L6.6 4.2 M0.9 7.6 L3.75 10.6 L6.6 7.6" fill="none" stroke="#e2e2e2" stroke-width="1.45" stroke-linecap="round" stroke-linejoin="round"/></svg>
<div style="position:absolute;left:1185.5px;top:653.8386px;font-size:11.6px;line-height:13.6px;color:#5f5f5f;font-weight:400;letter-spacing:0.28px;white-space:nowrap;-webkit-text-stroke:0.15px #5f5f5f">6 items</div>
<div class="a" style="left:656.0px;top:691px;width:749.0px;height:1px;background:#363636"></div>
<svg style="position:absolute;left:648.2px;top:676.8px;overflow:visible" width="5" height="8.5"><path d="M0.5 0.5 L4.5 4.25 L0.5 8.0" fill="none" stroke="#a8a8a8" stroke-width="1.4" stroke-linecap="round" stroke-linejoin="round"/></svg>
<div style="position:absolute;left:659.5px;top:674.3386px;font-size:11.6px;line-height:13.6px;color:#ececec;font-weight:400;letter-spacing:0.0px;white-space:nowrap;-webkit-text-stroke:0.15px #ececec">Quirks</div>
<div style="position:absolute;left:1037.5px;top:674.3386px;font-size:11.6px;line-height:13.6px;color:#ececec;font-weight:400;letter-spacing:0.12px;white-space:nowrap;-webkit-text-stroke:0.15px #ececec">Dictionary</div>
<svg style="position:absolute;left:1169.3px;top:675px;overflow:visible" width="8" height="12"><path d="M0.9 4.2 L3.75 1.3 L6.6 4.2 M0.9 7.6 L3.75 10.6 L6.6 7.6" fill="none" stroke="#e2e2e2" stroke-width="1.45" stroke-linecap="round" stroke-linejoin="round"/></svg>
<div style="position:absolute;left:1185.5px;top:674.8386px;font-size:11.6px;line-height:13.6px;color:#5f5f5f;font-weight:400;letter-spacing:0.28px;white-space:nowrap;-webkit-text-stroke:0.15px #5f5f5f">18 items</div>
<div class="a" style="left:656.0px;top:712px;width:749.0px;height:1px;background:#363636"></div>
<svg style="position:absolute;left:648.2px;top:697.8px;overflow:visible" width="5" height="8.5"><path d="M0.5 0.5 L4.5 4.25 L0.5 8.0" fill="none" stroke="#a8a8a8" stroke-width="1.4" stroke-linecap="round" stroke-linejoin="round"/></svg>
<div style="position:absolute;left:659.5px;top:695.3386px;font-size:11.6px;line-height:13.6px;color:#ececec;font-weight:400;letter-spacing:0.0px;white-space:nowrap;-webkit-text-stroke:0.15px #ececec">Scheme</div>
<div style="position:absolute;left:1037.5px;top:695.3386px;font-size:11.6px;line-height:13.6px;color:#ececec;font-weight:400;letter-spacing:0.12px;white-space:nowrap;-webkit-text-stroke:0.15px #ececec">Dictionary</div>
<svg style="position:absolute;left:1169.3px;top:696px;overflow:visible" width="8" height="12"><path d="M0.9 4.2 L3.75 1.3 L6.6 4.2 M0.9 7.6 L3.75 10.6 L6.6 7.6" fill="none" stroke="#e2e2e2" stroke-width="1.45" stroke-linecap="round" stroke-linejoin="round"/></svg>
<div style="position:absolute;left:1185.5px;top:695.8386px;font-size:11.6px;line-height:13.6px;color:#5f5f5f;font-weight:400;letter-spacing:0.28px;white-space:nowrap;-webkit-text-stroke:0.15px #5f5f5f">3 items</div>
<div class="a" style="left:1172px;top:716px;width:2px;height:1px;background:#9a9a9a"></div>
<svg class="a" style="left:0;top:0" width="1751" height="743">
<ellipse cx="471.5" cy="413" rx="153.5" ry="45.5" transform="rotate(14.85 471.5 413)" fill="none" stroke="#8c8400" stroke-width="5.2"/>
<ellipse cx="1232" cy="459.2" rx="128" ry="32.8" fill="none" stroke="#8c8400" stroke-width="5.2"/>
</svg>
<div class="a" style="left:1357px;top:665px;width:60px;height:80px;background:#232226;border:1px solid #57565a;border-radius:10px 0 0 0;box-sizing:border-box"></div>
<div class="a" style="left:1377px;top:685px;width:12px;height:12px;border-radius:50%;background:#ed5f57"></div>
<div class="a" style="left:1397px;top:685px;width:12px;height:12px;border-radius:50%;background:#f4bb2f"></div>
<div class="a" style="left:1368px;top:718px;width:50px;height:30px;background:#38363b;border-radius:6px"></div>
<svg class="a" style="left:1374px;top:725px" width="12" height="12"><circle cx="5.5" cy="5.5" r="4.3" fill="none" stroke="#b5b5b8" stroke-width="1.4"/></svg>
<div style="position:absolute;left:1393.5px;top:724px;font-size:13px;line-height:15px;color:#aaa9ad;font-weight:400;letter-spacing:0px;white-space:nowrap;">Su</div>
<div class="a" style="left:1405px;top:0;width:346px;height:743px;background:#000"></div>
<div class="a" style="left:0;top:734px;width:1751px;height:9px;background:#000"></div>
</body></html>
